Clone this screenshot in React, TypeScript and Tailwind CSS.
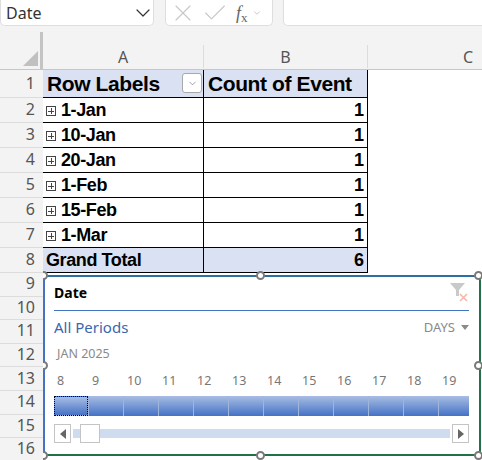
import React from 'react';
import { ChevronDown, X, Check } from 'lucide-react';

const dataRows = ['1-Jan', '10-Jan', '20-Jan', '1-Feb', '15-Feb', '1-Mar'];
const days = [8, 9, 10, 11, 12, 13, 14, 15, 16, 17, 18, 19];
const lowerRows = [9, 10, 11, 12, 13, 14, 15, 16];

const RowNum = ({ n, h }: { n: number; h: string }) => (
  <div className={`${h} w-[43px] shrink-0 bg-[#f3f3f3] border-b border-[#dcdcdc] flex items-center justify-end pr-[8px] pb-[2px] text-[16px] text-[#555] font-['Noto_Sans',sans-serif]`}>
    {n}
  </div>
);

const Handle = ({ className }: { className: string }) => (
  <div className={`absolute w-[9px] h-[9px] rounded-full bg-white border-2 border-[#7a7a7a] ${className}`} />
);

const App: React.FC = () => {
  return (
    <div className="relative w-[482px] h-[460px] overflow-hidden bg-white font-['Liberation_Sans',sans-serif]">
      {/* Formula bar */}
      <div className="h-[46px] bg-[#f3f3f3] flex items-start">
        <div className="w-[154px] h-[26px] bg-white border border-t-0 border-[#dedede] rounded-b-[5px] flex items-center justify-between pl-[5px] text-[16px] text-[#333] font-['Noto_Sans',sans-serif]">
          <span>Date</span>
          <ChevronDown size={24} strokeWidth={1.2} className="text-[#333] -mr-[2px]" />
        </div>
        <div className="w-[108px] h-[26px] ml-[11px] bg-white border border-t-0 border-[#dedede] rounded-b-[5px] flex items-center pl-[3px] text-[#c8c8c8]">
          <X size={28} strokeWidth={1} />
          <Check size={28} strokeWidth={1} className="ml-[4px]" />
          <span className="ml-[7px] text-[18px] leading-none italic text-[#666] font-['Liberation_Serif',serif]">f<span className="text-[13px] not-italic relative top-[3px]">x</span></span>
          <ChevronDown size={10} strokeWidth={1.5} className="ml-[4px] text-[#aaa]" />
        </div>
        <div className="flex-1 h-[26px] ml-[10px] bg-white border border-t-0 border-r-0 border-[#dedede] rounded-bl-[5px]" />
      </div>

      {/* Column headers */}
      <div className="flex h-[24px] bg-[#f3f3f3] border-b border-[#c6c6c6] text-[16px] text-[#555] font-['Noto_Sans',sans-serif]">
        <div className="relative w-[43px] -mt-[14px] h-[37px] border-r-[3px] border-[#c4c4c4]">
          <div className="absolute right-[2px] bottom-[3px] w-0 h-0 border-l-[15px] border-b-[15px] border-l-transparent border-b-[#c0c0c0]" />
        </div>
        <div className="w-[161px] flex items-center justify-center border-r border-[#dcdcdc] -translate-y-px">A</div>
        <div className="w-[164px] flex items-center justify-center border-r border-[#dcdcdc] -translate-y-px">B</div>
        <div className="flex-1 flex items-center justify-end pr-[9px] -translate-y-px">C</div>
      </div>

      {/* Pivot table */}
      <div className="flex">
        <RowNum n={1} h="h-[28px]" />
        <div className="w-[161px] h-[28px] bg-[#d9e1f2] border-b border-r border-black flex items-center justify-between pl-[4px] pr-[1px] text-[21px] leading-none font-bold text-black">
          <span className="-mt-px tracking-[-0.4px]">Row Labels</span>
          <span className="w-[20px] h-[20px] -mt-px bg-white border border-[#a8a8a8] rounded-[3px] flex items-center justify-center">
            <ChevronDown size={11} strokeWidth={1.5} className="text-[#777]" />
          </span>
        </div>
        <div className="w-[164px] h-[28px] bg-[#d9e1f2] border-b border-r border-black flex items-center pl-[4px] text-[21px] leading-none font-bold text-black">
          <span className="-mt-px tracking-[-0.4px]">Count of Event</span>
        </div>
      </div>
      {dataRows.map((label, i) => (
        <div key={label} className="flex">
          <RowNum n={i + 2} h="h-[25px]" />
          <div className="w-[161px] h-[25px] border-b border-r border-black flex items-center pl-[3px] text-[18px] leading-none font-bold text-black">
            <span className="w-[10px] h-[10px] mr-[5px] mt-[2px] border border-[#444] flex items-center justify-center relative">
              <span className="absolute w-[6px] h-px bg-[#444]" />
              <span className="absolute w-px h-[6px] bg-[#444]" />
            </span>
            <span className="tracking-[-0.4px]">{label}</span>
          </div>
          <div className="w-[164px] h-[25px] border-b border-r border-black flex items-center justify-end pr-[3px] text-[18px] leading-none font-bold text-black">1</div>
        </div>
      ))}
      <div className="flex">
        <RowNum n={8} h="h-[25px]" />
        <div className="w-[161px] h-[25px] bg-[#d9e1f2] border-b border-r border-black flex items-center pl-[3px] text-[18px] tracking-[-0.4px] leading-none font-bold text-black">Grand Total</div>
        <div className="w-[164px] h-[25px] bg-[#d9e1f2] border-b border-r border-black flex items-center justify-end pr-[3px] text-[18px] leading-none font-bold text-black">6</div>
      </div>
      {lowerRows.map((n) => (
        <RowNum key={n} n={n} h="h-[23.6px]" />
      ))}

      {/* Slicer floats over the sheet */}
      <div className="absolute left-[43px] top-[275px] w-[437.5px] h-[181px] bg-white border-2 border-[#217346] border-l-[#4472c4] border-t-[#2f6ea5] pl-[9px] pr-[9.5px]">
        <div className="h-[34px] border-b border-[#4472c4] flex items-center justify-between">
          <span className="text-[14px] font-bold text-black font-['Noto_Sans',sans-serif] -mt-[2px]">Date</span>
          <svg width="20" height="22" viewBox="0 0 20 22" className="-mt-[3px]">
            <path d="M1 2 H16 L10 9 V15 L7 15 V9 Z" fill="#c9c9c9" />
            <path d="M11 13 L18 20 M18 13 L11 20" stroke="#f4b6a6" strokeWidth="1.5" />
          </svg>
        </div>
        <div className="flex items-center justify-between h-[33px] text-[#3a66ad] font-['Noto_Sans',sans-serif]">
          <span className="text-[15px]">All Periods</span>
          <span className="flex items-center gap-[6px] text-[13px] text-[#8a8a8a]">
            DAYS
            <span className="w-0 h-0 border-x-[4.5px] border-t-[5px] border-x-transparent border-t-[#8a8a8a]" />
          </span>
        </div>
        <div className="h-[20px] pl-[3px] flex items-center text-[12.5px] text-[#8a8a8a] font-['Noto_Sans',sans-serif]">JAN 2025</div>
        <div className="mt-[7px] h-[20px] flex items-center overflow-hidden text-[12.5px] text-[#777] font-['Noto_Sans',sans-serif]">
          {days.map((d) => (
            <span key={d} className="w-[35px] shrink-0 pl-[3px]">{d}</span>
          ))}
        </div>
        <div className="mt-[5px] h-[20px] flex overflow-hidden">
          {days.map((d, i) => (
            <div
              key={d}
              className={`h-[20px] shrink-0 bg-gradient-to-b from-[#a9bde3] to-[#4472c4] ${i === 0 ? 'w-[34px] border border-dotted border-black' : 'w-[35px] border-l border-[#9fb5de]'}`}
            />
          ))}
        </div>
        <div className="mt-[8px] h-[19px] flex items-center">
          <div className="w-[17px] h-[19px] border border-[#c4c4c4] flex items-center justify-center">
            <span className="w-0 h-0 border-y-[5px] border-r-[6px] border-y-transparent border-r-[#666]" />
          </div>
          <div className="relative flex-1 h-[9px] mx-[2px] bg-[#cfdcf0]">
            <div className="absolute left-[7px] -top-[5px] w-[20px] h-[19px] bg-white border border-[#c4c4c4]" />
          </div>
          <div className="w-[17px] h-[19px] border border-[#c4c4c4] flex items-center justify-center">
            <span className="w-0 h-0 border-y-[5px] border-l-[6px] border-y-transparent border-l-[#666]" />
          </div>
        </div>
      </div>
      <Handle className="left-[39px] top-[271px] [clip-path:inset(0_0_0_45%)]" />
      <Handle className="left-[256px] top-[271px]" />
      <Handle className="left-[474px] top-[271px]" />
      <Handle className="left-[39px] top-[361px] [clip-path:inset(0_0_0_45%)]" />
      <Handle className="left-[474px] top-[361px]" />
      <Handle className="left-[39px] top-[451px] [clip-path:inset(0_0_0_45%)]" />
      <Handle className="left-[256px] top-[451px]" />
      <Handle className="left-[474px] top-[451px]" />
    </div>
  );
};

export default App;
